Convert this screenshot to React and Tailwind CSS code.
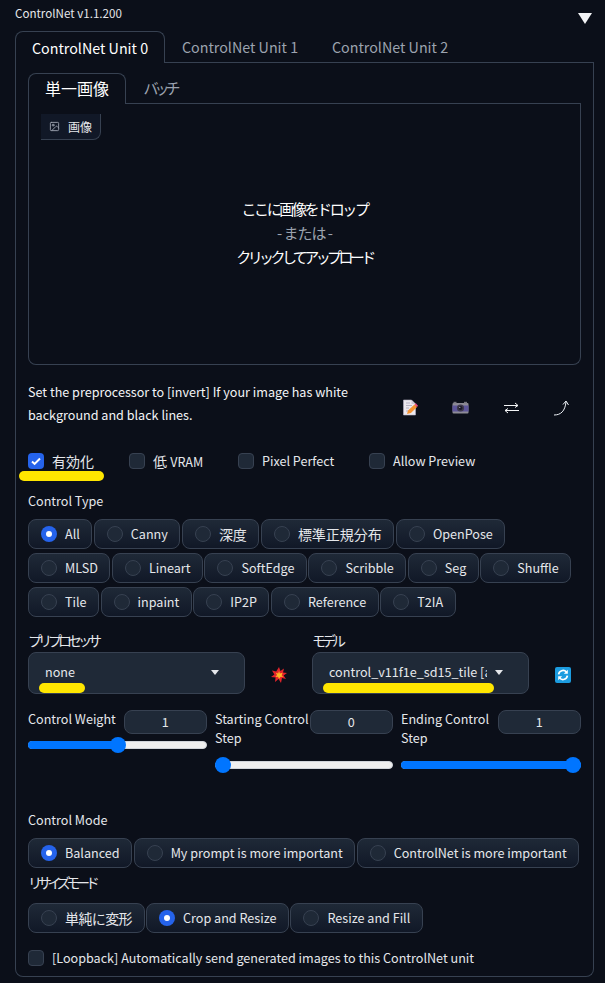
import React from 'react';
import { ImageIcon } from 'lucide-react';

const ROWS = [
  ['All', 'Canny', '深度', '標準正規分布', 'OpenPose'],
  ['MLSD', 'Lineart', 'SoftEdge', 'Scribble', 'Seg', 'Shuffle'],
  ['Tile', 'inpaint', 'IP2P', 'Reference', 'T2IA'],
];

const hasCjk = (s) => /[^\x00-\x7f]/.test(s);

const Radio = ({ label, checked, className = '' }) => (
  <div className={`flex h-[30px] items-center gap-2 whitespace-nowrap rounded-lg border border-[#374151] bg-gradient-to-b from-[#1f2937] to-[#111827] pl-3 pr-[11.5px] text-[#e5e7eb] ${hasCjk(label) ? 'text-sm' : 'text-[12.6px]'} ${className}`}>
    <span className={checked
      ? 'flex h-4 w-4 items-center justify-center rounded-full bg-[#2563eb]'
      : 'h-4 w-4 rounded-full border border-[#374151] bg-[#1f2937]'}>
      {checked && <span className="h-1.5 w-1.5 rounded-full bg-white" />}
    </span>
    {label}
  </div>
);

const Check = ({ label, checked, className = '' }) => (
  <label className={`flex items-center gap-2 text-[#e5e7eb] ${hasCjk(label) ? 'text-sm' : 'text-[12.6px]'} ${className}`}>
    <span className={checked
      ? 'flex h-4 w-4 items-center justify-center rounded bg-[#2563eb]'
      : 'h-4 w-4 rounded border border-[#374151] bg-[#1f2937]'}>
      {checked && (
        <svg viewBox="0 0 16 16" className="h-4 w-4" fill="none" stroke="white" strokeWidth="2">
          <path d="M4 8.5l2.6 2.4L12 5.5" />
        </svg>
      )}
    </span>
    {label}
  </label>
);

const Highlight = ({ className }) => (
  <span className={`absolute h-[10px] rounded-full bg-[#ffe600] ${className}`} />
);

const Slider = ({ pct, className = '' }) => (
  <div className={`relative h-4 w-full ${className}`}>
    <div className="absolute left-0 right-0 top-1 h-2 rounded-full border border-[#d1d5db] bg-[#efefef]" />
    <div className="absolute left-0 top-1 h-2 rounded-full bg-[#0075ff]" style={{ width: `${pct}%` }} />
    <div
      className="absolute top-0 h-4 w-4 rounded-full bg-[#0075ff]"
      style={{ left: `calc(${pct}% - ${(pct / 100) * 16}px)` }}
    />
  </div>
);

const NumberBox = ({ value }) => (
  <div className="flex h-6 w-[83.5px] shrink-0 items-center justify-center rounded-lg border border-[#374151] bg-[#1f2937] text-[12.6px] text-[#e5e7eb]">
    {value}
  </div>
);

const Caret = () => (
  <svg viewBox="0 0 10 6" className="mt-[1px] h-[5px] w-2 shrink-0" fill="#e5e7eb">
    <path d="M0 0h10L5 6z" />
  </svg>
);

const Select = ({ value }) => (
  <div className="mt-[2px] flex h-[42px] w-[217px] items-center rounded-lg border border-[#374151] bg-[#1f2937] pb-[2px] pl-4 pr-[25px] text-[12.6px] text-[#e5e7eb]">
    <span className="mr-2 flex-1 overflow-hidden whitespace-nowrap">{value}</span>
    <Caret />
  </div>
);

const Memo = () => (
  <svg viewBox="0 0 16 17" className="h-[17px] w-4">
    <path d="M1.5 1h8l4 4v11h-12z" fill="#ece8ee" stroke="#b9b2c4" strokeWidth=".6" />
    <path d="M9.5 1v4h4" fill="#cfc8d6" />
    <path d="M4 4h4M4 6.5h6M4 9h3M4 12h3" stroke="#a9a3b8" strokeWidth=".8" />
    <path d="M5 15l1-3.5 6.5-6 2.6 2.6-6.2 6z" fill="#f59331" />
    <path d="M12.5 5.5l1.3-1.2 2.2 2.4-1 1.3z" fill="#ee4a80" />
  </svg>
);

const Camera = () => (
  <svg viewBox="0 0 17 13" className="h-[13px] w-[17px]">
    <rect x="0.5" y="2" width="16" height="10.5" rx="1" fill="#8d8b96" />
    <rect x="0.5" y="4.5" width="16" height="6" fill="#5d559a" />
    <rect x="1.5" y="0.8" width="3" height="1.5" fill="#77757f" />
    <rect x="12" y="0.8" width="3" height="1.5" fill="#77757f" />
    <circle cx="8.5" cy="7" r="3.6" fill="#3f3a4c" />
    <circle cx="8.5" cy="7" r="2" fill="#1c1a2a" />
    <circle cx="7.8" cy="6.3" r=".6" fill="#c9c6de" />
  </svg>
);

const Swap = () => (
  <svg viewBox="0 0 15 12" className="h-3 w-[15px]" fill="none" stroke="#f3f4f6" strokeWidth="1">
    <path d="M0 3.5h14M11 1l3 2.5-3 2" />
    <path d="M15 8.5H1M4 6.5l-3 2 3 2.5" />
  </svg>
);

const Bend = () => (
  <svg viewBox="0 0 16 16" className="h-4 w-4" fill="none" stroke="#eef2f7" strokeWidth="1">
    <path d="M0 15c7 0 11-4 12-13" />
    <path d="M9 4.5L12 1l2.5 4" />
  </svg>
);

const Boom = () => (
  <svg viewBox="0 0 16 16" className="h-4 w-4">
    <path d="M8 0l1.4 4L13 1.5l-1 4L16 6l-3.4 2.4L15 12l-4-1-1 5-2.4-4L4 15l.6-4.4L0 10l3.4-2.6L1 3.6l4.2 1z" fill="#e5242b" />
    <path d="M8 4l1 2.4 2.6-.6-1 2.4 1.6 1.8-2.6-.2L8 12 7 9.8l-2.6.2L6 8 4.8 5.8l2.4.6z" fill="#fbb726" />
  </svg>
);

const Refresh = () => (
  <svg viewBox="0 0 16 16" className="h-4 w-4">
    <rect width="16" height="16" rx="2" fill="#1c9ce0" />
    <path d="M3.6 7.4A4.5 4.5 0 0 1 11.4 5" fill="none" stroke="white" strokeWidth="1.7" />
    <path d="M12.8 2.8v4h-4z" fill="white" />
    <path d="M12.4 8.6A4.5 4.5 0 0 1 4.6 11" fill="none" stroke="white" strokeWidth="1.7" />
    <path d="M3.2 13.2v-4h4z" fill="white" />
  </svg>
);

const App = () => (
  <div
    className="h-[983px] w-[605px] overflow-hidden bg-[#0b0f19] text-[#e5e7eb]"
    style={{ fontFamily: '"Noto Sans CJK JP", "Noto Sans", sans-serif' }}
  >
    <div className="flex h-[31px] items-start justify-between pl-[15px] pr-[13px] pt-[4px]">
      <span className="text-[11.6px] leading-[18px]">ControlNet v1.1.200</span>
      <svg viewBox="0 0 14 11" className="mt-[9px] h-[11px] w-[14px]" fill="#f3f4f6">
        <path d="M0 0h14L7 11z" />
      </svg>
    </div>

    <div className="mx-[15px] w-[579px]">
      <div className="flex h-8 border-b border-[#374151] text-[14.3px]">
        <div className="-mb-px flex h-8 w-[150px] items-center justify-center rounded-t-lg border border-b-0 border-[#374151] bg-[#0b0f19] text-white">
          ControlNet Unit 0
        </div>
        <div className="flex h-[31px] w-[150px] items-center justify-center text-[#9ca3af]">ControlNet Unit 1</div>
        <div className="flex h-[31px] w-[150px] items-center justify-center text-[#9ca3af]">ControlNet Unit 2</div>
      </div>

      <div className="h-[914px] rounded-b-lg border border-t-0 border-[#374151] px-3 pt-[10px]">
        <div className="flex h-[31px] border-b border-[#374151] text-base">
          <div className="-mb-px flex h-[31px] w-[98px] items-center justify-center rounded-t-lg border border-b-0 border-[#374151] bg-[#0b0f19] pb-[3px] text-white">
            単一画像
          </div>
          <div className="flex w-[68px] items-center justify-center text-[15px] tracking-[-4px] text-[#9ca3af]">バッチ</div>
        </div>

        <div className="relative h-[261px] rounded-b-lg border border-t-0 border-[#374151]">
          <div className="absolute left-3 top-[10px] flex h-[26px] w-[60px] items-center gap-2 rounded-br-lg border-b border-r border-[#374151] bg-[#111827] pl-2 text-xs text-[#e5e7eb]">
            <ImageIcon size={11} className="text-[#9ca3af]" />
            画像
          </div>
          <div className="flex h-full flex-col items-center justify-center pb-[3px] text-[15px] leading-[24px] text-white">
            <span className="tracking-[-2.4px]">ここに画像をドロップ</span>
            <span className="tracking-[-1px] text-[#9ca3af]">- または -</span>
            <span className="tracking-[-3.6px]">クリックしてアップロード</span>
          </div>
        </div>

        <div className="mt-[15px] flex items-start">
          <p className="w-[360px] text-[12.6px] leading-[23px] text-[#f3f4f6]">
            Set the preprocessor to [invert] If your image has white background and black lines.
          </p>
          <div className="ml-[14px] mt-[19px] flex items-center">
            <div className="flex w-[50px] justify-start"><Memo /></div>
            <div className="flex w-[52px] justify-start"><Camera /></div>
            <div className="flex w-[50px] justify-start"><Swap /></div>
            <div className="flex w-4 justify-start"><Bend /></div>
          </div>
        </div>

        <div className="relative mt-[23px] flex h-6 items-center">
          <Check label="有効化" checked className="w-[101px]" />
          <label className="flex w-[109px] items-center gap-2 text-sm text-[#e5e7eb]">
            <span className="h-4 w-4 rounded border border-[#374151] bg-[#1f2937]" />
            <span>低 <span className="text-[12.6px]">VRAM</span></span>
          </label>
          <Check label="Pixel Perfect" className="w-[131px]" />
          <Check label="Allow Preview" />
          <Highlight className="-left-[9px] top-[22px] w-[85px]" />
        </div>

        <div className="mt-[18px] h-5 text-[12.6px] leading-5">Control Type</div>
        <div className="mt-2 flex flex-col gap-1">
          {ROWS.map((row, i) => (
            <div key={i} className="flex gap-[1.5px]">
              {row.map((label) => <Radio key={label} label={label} checked={label === 'All'} />)}
            </div>
          ))}
        </div>

        <div className="mt-[13px] flex">
          <div className="relative w-[217px]">
            <div className="h-5 text-sm leading-5 tracking-[-4px]">プリプロセッサ</div>
            <Select value="none" />
            <Highlight className="left-[11px] top-[53px] w-[46px]" />
          </div>
          <div className="mt-[37px] flex w-[67px] justify-center"><Boom /></div>
          <div className="relative w-[217px]">
            <div className="h-5 text-sm leading-5 tracking-[-4px]">モデル</div>
            <Select value="control_v11f1e_sd15_tile [a371b31b]" />
            <Highlight className="left-[11px] top-[53px] w-[171px]" />
          </div>
          <div className="ml-[26px] mt-[37px]"><Refresh /></div>
        </div>

        <div className="mt-[16px] grid h-[100px] grid-cols-[179px_178px_180px] gap-x-2 text-[12.6px]">
          <div>
            <div className="flex justify-between">
              <span className="-mt-px leading-[19px]">Control Weight</span>
              <NumberBox value="1" />
            </div>
            <Slider pct={50} className="mt-[3px]" />
          </div>
          <div>
            <div className="flex justify-between">
              <span className="-mt-px w-[94px] leading-[19px]">Starting Control Step</span>
              <NumberBox value="0" />
            </div>
            <Slider pct={0} className="mt-[10px]" />
          </div>
          <div>
            <div className="flex justify-between">
              <span className="-mt-px w-[94px] leading-[19px]">Ending Control Step</span>
              <NumberBox value="1" />
            </div>
            <Slider pct={100} className="mt-[10px]" />
          </div>
        </div>

        <div className="h-5 text-[12.6px] leading-5">Control Mode</div>
        <div className="mt-2 flex gap-[1.5px]">
          <Radio label="Balanced" checked />
          <Radio label="My prompt is more important" />
          <Radio label="ControlNet is more important" />
        </div>
        <div className="mt-[4px] h-5 text-sm leading-5 tracking-[-4.3px]">リサイズモード</div>
        <div className="mt-[11px] flex gap-[1.5px]">
          <Radio label="単純に変形" className="tracking-[-0.6px]" />
          <Radio label="Crop and Resize" checked />
          <Radio label="Resize and Fill" />
        </div>
        <Check label="[Loopback] Automatically send generated images to this ControlNet unit" className="mt-[16px]" />
      </div>
    </div>
  </div>
);

export default App;
